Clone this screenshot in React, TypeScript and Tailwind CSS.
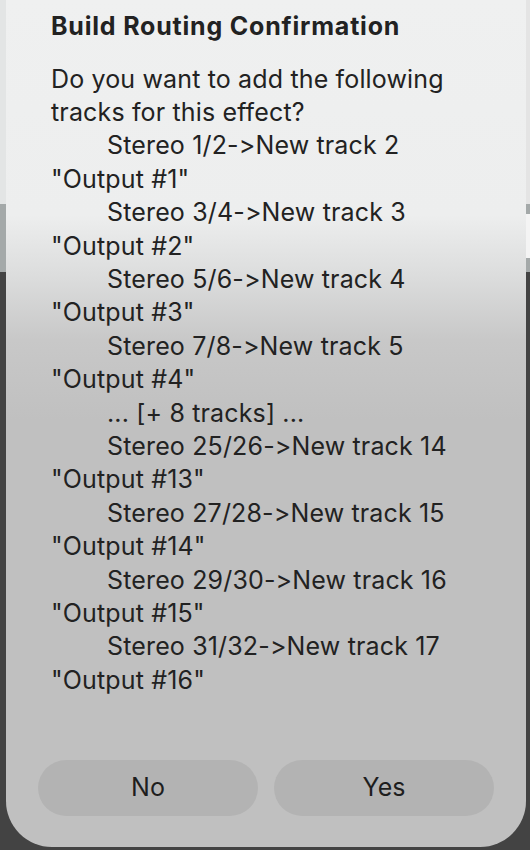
import React from "react";

const tracks = [
  ["Stereo 1/2->New track 2", "\"Output #1\""],
  ["Stereo 3/4->New track 3", "\"Output #2\""],
  ["Stereo 5/6->New track 4", "\"Output #3\""],
  ["Stereo 7/8->New track 5", "\"Output #4\""],
];

const moreTracks = [
  ["Stereo 25/26->New track 14", "\"Output #13\""],
  ["Stereo 27/28->New track 15", "\"Output #14\""],
  ["Stereo 29/30->New track 16", "\"Output #15\""],
  ["Stereo 31/32->New track 17", "\"Output #16\""],
];

const TrackLines = ({ items }: { items: string[][] }) => (
  <>
    {items.map(([route, name]) => (
      <React.Fragment key={route}>
        <div className="pl-[56px]">{route}</div>
        <div>{name}</div>
      </React.Fragment>
    ))}
  </>
);

export default function App() {
  return (
    <div
      className="relative flex h-[850px] w-[530px] overflow-hidden bg-[linear-gradient(to_bottom,#e3e5e5_0,#e3e5e5_204px,#a4a9a9_204px,#a4a9a9_272px,#434343_272px)] [font-feature-settings:'calt'_0]"
      style={{ fontFamily: "Inter, 'Noto Sans', sans-serif" }}
    >
      <div className="w-[6px] shrink-0" />
      <div className="flex h-[847px] w-[520px] shrink-0 flex-col rounded-b-[46px] bg-[linear-gradient(to_bottom,#eff0f0_0,#edeeee_215px,#dcdddd_275px,#c8c8c8_340px,#c0c0c0_420px,#c0c0c0_100%)] text-[#222222]">
        <h1 className="pl-[45px] pt-[10px] text-[25px] font-bold leading-[32px] tracking-[0.8px]">
          Build Routing Confirmation
        </h1>
        <div className="mt-[20.5px] pl-[45px] text-[25px] leading-[33.4px] tracking-[0.15px]">
          <div>Do you want to add the following</div>
          <div>tracks for this effect?</div>
          <TrackLines items={tracks} />
          <div className="pl-[56px]">... [+ 8 tracks] ...</div>
          <TrackLines items={moreTracks} />
        </div>
        <div className="flex-1" />
        <div className="flex gap-[16px] px-[32px] pb-[31px]">
          <button className="h-[56px] flex-1 rounded-full bg-[#b3b3b3] text-[25px] text-[#1e1e1e]">
            No
          </button>
          <button className="h-[56px] flex-1 rounded-full bg-[#b3b3b3] text-[25px] text-[#1e1e1e]">
            Yes
          </button>
        </div>
      </div>
      <div className="w-[4px] shrink-0 bg-[linear-gradient(to_bottom,#e4e4e4_0,#e4e4e4_204px,#a4a9a9_204px,#a4a9a9_214px,#f4f4f4_214px,#f4f4f4_258px,#a4a9a9_258px,#a4a9a9_272px,#434343_272px)]" />
    </div>
  );
}
